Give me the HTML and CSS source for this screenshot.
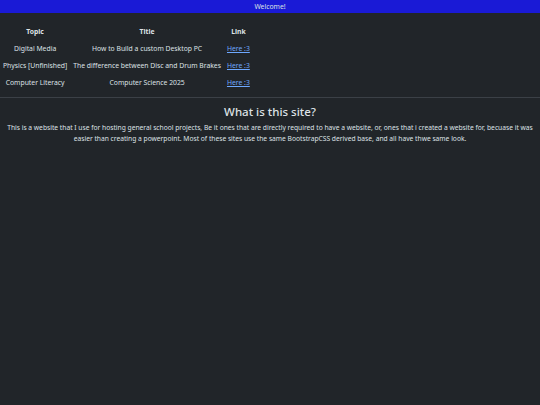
FILE: index.html
```html
<!DOCTYPE html>
<html lang="en">
<head>
    <meta charset="UTF-8">
    <meta name="viewport" content="width=device-width, initial-scale=1.0">
    <title>School Projects</title>
    <link rel="stylesheet" href="styles.css">
</head>
<body>

<div class="topbar">Welcome!</div>

<table class="projects">
    <thead>
        <tr>
            <th>Topic</th>
            <th>Title</th>
            <th>Link</th>
        </tr>
    </thead>
    <tbody>
        <tr>
            <td>Digital Media</td>
            <td>How to Build a custom Desktop PC</td>
            <td><a href="#">Here :3</a></td>
        </tr>
        <tr>
            <td>Physics [Unfinished]</td>
            <td>The difference between Disc and Drum Brakes</td>
            <td><a href="#">Here :3</a></td>
        </tr>
        <tr>
            <td>Computer Literacy</td>
            <td>Computer Science 2025</td>
            <td><a href="#">Here :3</a></td>
        </tr>
    </tbody>
</table>

<hr>

<div class="about">
    <h2>What is this site?</h2>
    <p>This is a website that I use for hosting general school projects, Be it ones that are directly required to have a website, or, ones that i created a website for, becuase it was easier than creating a powerpoint. Most of these sites use the same BootstrapCSS derived base, and all have thwe same look.</p>
</div>

</body>
</html>
```

FILE: styles.css
```css
body {
    margin: 0;
    font-family: "Noto Sans", sans-serif;
    font-size: 6.8px;
    line-height: 1.5;
    background-color: #212529;
    color: #dee2e6;
}
.topbar {
    background-color: #1a1ad6;
    color: #dee2e6;
    text-align: center;
    height: 13px;
    line-height: 13px;
}
.projects {
    border-collapse: collapse;
    margin-top: 11px;
    margin-bottom: 5px;
}
.projects th, .projects td {
    height: 17px;
    padding: 0 3px;
    text-align: center;
}
.projects th {
    font-weight: bold;
}
.projects a {
    color: #6ea8fe;
}
hr {
    margin: 0;
    border: none;
    border-top: 1px solid #3b4046;
}
.about {
    text-align: center;
}
.about h2 {
    font-weight: 500;
    font-size: 11.5px;
    line-height: 1.2;
    margin: 7px 0 3px;
}
.about p {
    margin: 0;
    font-size: 6.7px;
    line-height: 11px;
}
```
